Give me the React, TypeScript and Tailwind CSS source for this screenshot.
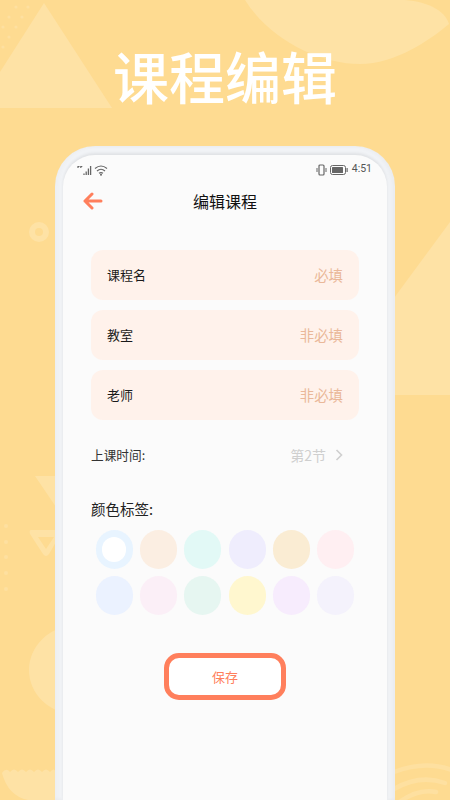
const CJK = "font-['Noto_Sans_CJK_SC','Noto_Sans',sans-serif]";

function Decor() {
  return (
    <svg className="absolute inset-0" width="450" height="800" viewBox="0 0 450 800" fill="#fee2a5">
      <path d="M44 3 L112 108 L0 108 L0 72 Z" />
      <path d="M245 0 C270 40 320 64 360 64 C395 64 430 40 449 24 C445 10 425 0 400 0 Z" />
      <path d="M450 222 L394 298 L394 395 L450 395 Z" />
      <circle cx="39" cy="232" r="7" fill="none" stroke="#fee2a5" strokeWidth="6" />
      <path d="M35 476 L56 476 L56 507 Z" />
      <path d="M31 530 L56 530 L56 542 L49 554 Q46 558 43 554 L30 534 Q29 530 31 530 Z M38 537 L46 549 L54 537 Z" fillRule="evenodd" />
      <ellipse cx="75" cy="670" rx="46" ry="44" />
      <path d="M2 773 Q6 767 10 772 Q14 767 18 772 Q22 767 26 772 Q30 767 34 772 Q38 767 42 772 Q46 767 50 772 Q54 767 56 772 L56 800 L28 800 Q8 796 2 773 Z" />
      {[526, 542, 557, 573, 589].map((y) => (
        <circle key={y} cx="6" cy={y} r="2" fill="#fee0a0" />
      ))}
      {[[16, 7], [28, 7], [9, 17], [22, 17], [3, 27], [16, 27], [9, 37], [3, 47]].map(([x, y]) => (
        <circle key={`${x}-${y}`} cx={x} cy={y} r="1.6" fill="#fee0a0" />
      ))}
      <g fill="none" stroke="#fee0a0" strokeWidth="4.5" strokeLinecap="round">
        <path d="M394 772 Q425 760 452 770" />
        <path d="M394 789 Q420 774 445 783" />
        <path d="M398 803 Q418 788 436 792" />
      </g>
    </svg>
  );
}

function Field({ label, hint }: { label: string; hint: string }) {
  return (
    <div className="flex h-[50px] items-center justify-between rounded-xl bg-[#fff2eb] px-4">
      <span className="text-[13px] text-[#1a1a1a]">{label}</span>
      <span className="text-[14.4px] text-[#eab899]">{hint}</span>
    </div>
  );
}

const colours = [
  "bg-[#e8f4ff]", "bg-[#fbeee2]", "bg-[#e2f9f6]", "bg-[#efedfd]", "bg-[#faecd3]", "bg-[#ffeff2]",
  "bg-[#ebf2ff]", "bg-[#fbeff7]", "bg-[#e6f6f1]", "bg-[#fff7cf]", "bg-[#f7ecfd]", "bg-[#f4f2fc]",
];

export default function App() {
  return (
    <div className={`relative h-[800px] w-[450px] overflow-hidden bg-[#fedb91] ${CJK}`}>
      <Decor />
      <div className="relative flex h-full flex-col items-center">
        <h1 className="mt-[35px] h-[111px] text-[56px] leading-[80px] font-medium text-white">课程编辑</h1>
        <div className="h-[654px] w-[340px] rounded-t-[40px] bg-[#f1f3f6] px-[8px] pt-[9px] shadow-[inset_-3px_0_4px_rgba(0,0,0,0.03),inset_3px_0_4px_rgba(0,0,0,0.02)]">
          <div className="h-full rounded-t-[32px] bg-[#fbfbfb] shadow-[0_-2px_3px_rgba(0,0,0,0.07)]">
            <div className="flex h-[27px] items-center justify-between pt-[2px] pr-[15px] pl-[14px] text-[#555]">
              <svg width="31" height="12" viewBox="0 0 31 12" fill="none" stroke="#666">
                <path d="M1 4V2.5h1.5M3.8 4V2.5h1.5" strokeWidth="1.2" />
                <path d="M7 11v-1.5M9.2 11V7.5M11.4 11V4.5M13.6 11V2" strokeWidth="1.3" />
                <path d="M18 4.5Q24 -0.5 30 4.5M20 7Q24 3.5 28 7M22 9.3Q24 7.8 26 9.3" strokeWidth="1.2" />
                <circle cx="24" cy="10.8" r="1" fill="#666" stroke="none" />
              </svg>
              <div className="flex items-center gap-[3px]">
                <svg width="11" height="12" viewBox="0 0 11 12" fill="none" stroke="#666">
                  <rect x="3" y="1" width="5" height="10" rx="1" strokeWidth="1.2" />
                  <path d="M1 4v4M10 4v4" strokeWidth="1" />
                </svg>
                <svg width="18" height="10" viewBox="0 0 18 10" fill="none">
                  <rect x="0.5" y="0.5" width="15" height="9" rx="2" stroke="#666" />
                  <rect x="2" y="2" width="11" height="6" rx="0.5" fill="#666" />
                  <rect x="16.5" y="3" width="1.2" height="4" fill="#666" />
                </svg>
                <span className="ml-[1px] font-['Roboto',sans-serif] text-[10.5px] leading-none">4:51</span>
              </div>
            </div>
            <div className="relative flex h-[37px] items-center justify-center">
              <svg className="absolute top-[10px] left-[20px]" width="20" height="18" viewBox="0 0 20 18" fill="none" stroke="#ff7f5c" strokeWidth="3" strokeLinecap="round" strokeLinejoin="round">
                <path d="M2 9h16M9 2L2 9l7 7" />
              </svg>
              <span className="text-[16px] text-[#111]">编辑课程</span>
            </div>
            <div className="flex flex-col gap-[10px] px-[28px] pt-[31px]">
              <Field label="课程名" hint="必填" />
              <Field label="教室" hint="非必填" />
              <Field label="老师" hint="非必填" />
            </div>
            <div className="mt-[24px] flex h-[22px] items-center justify-between pr-[44px] pl-[28px]">
              <span className="text-[12.7px] text-[#333]">上课时间:</span>
              <div className="flex items-center gap-[9px]">
                <span className="text-[14px] text-[#cfcfcf]">第2节</span>
                <svg width="8" height="12" viewBox="0 0 8 12" fill="none" stroke="#cfcfcf" strokeWidth="1.6">
                  <path d="M1.5 1l5 5-5 5" />
                </svg>
              </div>
            </div>
            <div className="mt-[32px] pl-[28px] text-[14.5px] leading-[22px] text-[#222]">颜色标签:</div>
            <div className="mt-[10px] ml-[32.5px] grid w-[260px] grid-cols-[repeat(6,37px)] gap-x-[7.4px] gap-y-[7px]">
              {colours.map((c, i) => (
                <div key={c} className={`flex h-[39px] items-center justify-center rounded-full ${c}`}>
                  {i === 0 && <div className="h-[25px] w-[24px] rounded-full bg-white" />}
                </div>
              ))}
            </div>
            <div className="mt-[38px] flex justify-center">
              <button className="flex h-[47px] w-[122px] items-center justify-center rounded-[15px] border-[5px] border-[#ff7f5c] bg-white text-[13px] text-[#ff7f5c]">保存</button>
            </div>
          </div>
        </div>
      </div>
    </div>
  );
}
